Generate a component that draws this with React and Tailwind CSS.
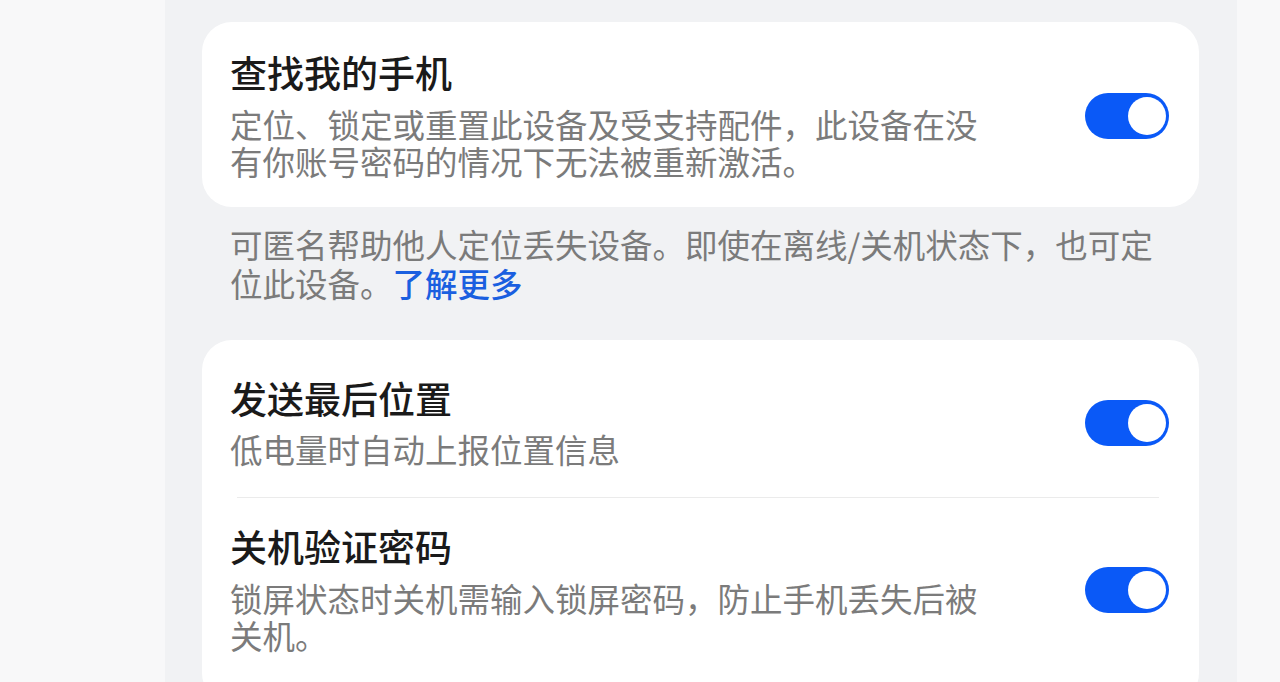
import React from "react";

const font = { fontFamily: '"Noto Sans CJK SC", "Noto Sans", sans-serif' };

function Toggle() {
  return (
    <div className="relative mt-[5px] h-[46px] w-[84px] shrink-0 rounded-full bg-[#0a59f7]">
      <div className="absolute right-[3px] top-[4px] h-[38px] w-[38px] rounded-full bg-white" />
    </div>
  );
}

function Row({ title, desc, pt, pb, gap }) {
  return (
    <div className={`flex items-center justify-between pl-[28px] pr-[30px] ${pt} ${pb}`}>
      <div className="flex flex-col">
        <div className="text-[37px] leading-[48px] font-medium text-[#1a1a1a]">{title}</div>
        <div className={`${gap} max-w-[760px] text-[32.5px] leading-[37px] text-[#7b7b7b]`}>{desc}</div>
      </div>
      <Toggle />
    </div>
  );
}

export default function App() {
  return (
    <div className="flex h-[682px] w-[1280px] overflow-hidden bg-[#f8f8f9]" style={font}>
      <div className="w-[165px] shrink-0" />
      <div className="flex w-[1072px] shrink-0 flex-col bg-[#f1f2f4] pl-[37px] pr-[38px] pt-[22px]">
        <div className="rounded-[30px] bg-white">
          <Row
            title="查找我的手机"
            desc="定位、锁定或重置此设备及受支持配件，此设备在没有你账号密码的情况下无法被重新激活。"
            pt="pt-[26px]"
            pb="pb-[28px]"
            gap="mt-[9px]"
          />
        </div>
        <div className="mt-[17px] max-w-[975px] pl-[28px] text-[32.5px] leading-[39px] text-[#7b7b7b]">
          可匿名帮助他人定位丢失设备。即使在离线/关机状态下，也可定位此设备。
          <span className="font-medium text-[#1a5fe0]">了解更多</span>
        </div>
        <div className="mt-[38px] shrink-0 rounded-[30px] bg-white">
          <Row
            title="发送最后位置"
            desc="低电量时自动上报位置信息"
            pt="pt-[34px]"
            pb="pb-[30px]"
            gap="mt-[8px]"
          />
          <div className="ml-[35px] mr-[40px] h-px bg-[#ebebeb]" />
          <Row
            title="关机验证密码"
            desc="锁屏状态时关机需输入锁屏密码，防止手机丢失后被关机。"
            pt="pt-[24px]"
            pb="pb-[50px]"
            gap="mt-[9px]"
          />
        </div>
      </div>
      <div className="flex-1" />
    </div>
  );
}
